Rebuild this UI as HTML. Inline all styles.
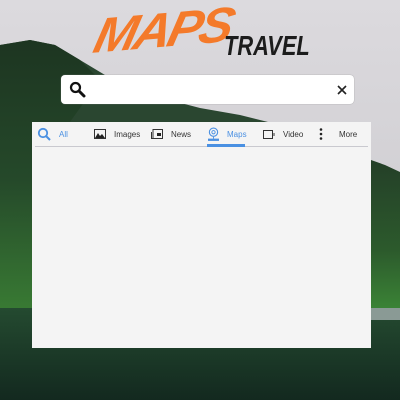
<!DOCTYPE html>
<html><head><meta charset="utf-8"><style>
*{margin:0;padding:0;box-sizing:border-box}
body{width:400px;height:400px;overflow:hidden;position:relative;font-family:"Liberation Sans",sans-serif;background:#d9d7dc}
svg.bg{position:absolute;left:0;top:0}
.logo1{position:absolute;left:102px;top:8px;font-size:50px;line-height:56px;font-weight:bold;font-style:italic;color:#f47a2a;letter-spacing:-3px;transform:skewX(-18deg) rotate(-5deg);transform-origin:left top}
.logo2{position:absolute;left:224px;top:32px;font-size:28px;line-height:28px;font-weight:bold;font-style:italic;color:#1c1c1c;transform:scaleX(0.78);transform-origin:left top;letter-spacing:0px}
.search{position:absolute;left:61px;top:75px;width:293px;height:29px;background:#fff;border-radius:4px;box-shadow:0 0 1px #888}
.panel{position:absolute;left:32px;top:122px;width:339px;height:226px;background:#f4f4f4}
.line{position:absolute;left:3px;top:23.5px;width:333px;height:1px;background:#c9c9cf}
.tab{position:absolute;top:3px;height:18px;font-size:8px;color:#333;display:flex;align-items:center}
.tab svg{margin-right:8px}
</style></head><body>
<svg class="bg" width="400" height="400" viewBox="0 0 400 400">
<defs>
<linearGradient id="sky" x1="0" y1="0" x2="0" y2="1"><stop offset="0" stop-color="#dcdade"/><stop offset="1" stop-color="#c6c5c9"/></linearGradient>
<linearGradient id="water" x1="0" y1="0" x2="0" y2="1"><stop offset="0" stop-color="#244a30"/><stop offset="1" stop-color="#13291f"/></linearGradient>
<linearGradient id="hl" x1="0" y1="0" x2="0" y2="1"><stop offset="0" stop-color="#1d3521"/><stop offset="0.5" stop-color="#25492a"/><stop offset="1" stop-color="#3a7e34"/></linearGradient>
<linearGradient id="hr" x1="0" y1="0" x2="0" y2="1"><stop offset="0" stop-color="#243f28"/><stop offset="0.6" stop-color="#2c5a2c"/><stop offset="1" stop-color="#3b8436"/></linearGradient>
</defs>
<rect width="400" height="400" fill="url(#sky)"/>
<path d="M0 45 L30 40 L55 45 L80 60 L105 75 L150 95 L200 108 L240 115 L260 120 L280 125 L0 125Z" fill="#2a4630"/>
<path d="M0 45 L30 40 L55 45 L80 60 L100 80 L70 122 L32 122 L32 320 L0 320Z" fill="url(#hl)"/>
<path d="M371 160 L385 165 L400 172 L400 310 L371 310Z" fill="url(#hr)"/>
<rect x="0" y="308" width="400" height="92" fill="url(#water)"/>
<rect x="371" y="308" width="29" height="12" fill="#8a9a95"/>
</svg>
<div class="logo1">MAPS</div>
<div class="logo2">TRAVEL</div>
<div class="search">
<svg style="position:absolute;left:8px;top:6px" width="17" height="17" viewBox="0 0 17 17"><circle cx="6.5" cy="6.5" r="4.5" fill="none" stroke="#111" stroke-width="2.2"/><path d="M10 10 L15 15" stroke="#111" stroke-width="3" stroke-linecap="round"/></svg>
<svg style="position:absolute;left:276px;top:10px" width="10" height="10" viewBox="0 0 10 10"><path d="M1 1L9 9M9 1L1 9" stroke="#222" stroke-width="1.6"/></svg>
</div>
<div class="panel">
<div class="tab" style="left:5px;color:#4a90e2"><svg width="14" height="14" viewBox="0 0 14 14"><circle cx="6" cy="6" r="4.2" fill="none" stroke="#4a90e2" stroke-width="1.8"/><path d="M9 9L13 13" stroke="#4a90e2" stroke-width="2"/></svg>All</div>
<div class="tab" style="left:62px"><svg width="12" height="10" viewBox="0 0 12 10"><rect x="0.5" y="0.5" width="11" height="9" fill="none" stroke="#333"/><path d="M1 9L4 4L6 7L8 5L11 9Z" fill="#222"/></svg>Images</div>
<div class="tab" style="left:119px"><svg width="12" height="10" viewBox="0 0 12 10"><rect x="2" y="0.5" width="9.5" height="9" fill="none" stroke="#333"/><path d="M0.5 3V9.5H2" fill="none" stroke="#333"/><rect x="6" y="4" width="4" height="3" fill="#222"/></svg>News</div>
<div class="tab" style="left:176px;color:#4a90e2"><svg width="11" height="15" viewBox="0 0 12 15"><circle cx="6" cy="5" r="4.5" fill="none" stroke="#4a90e2" stroke-width="1.2"/><circle cx="6" cy="5" r="1.8" fill="none" stroke="#4a90e2"/><path d="M6 10V12" stroke="#4a90e2"/><rect x="0" y="12" width="12" height="2.5" fill="#4a90e2"/></svg>Maps</div>
<div style="position:absolute;left:175px;top:22px;width:38px;height:2.5px;background:#4a90e2;z-index:2"></div>
<div class="tab" style="left:231px"><svg width="12" height="9" viewBox="0 0 12 9"><rect x="0.5" y="0.5" width="9" height="8" fill="none" stroke="#333"/><path d="M11 3V6" stroke="#333"/></svg>Video</div>
<div class="tab" style="left:287px"><svg width="4" height="12" viewBox="0 0 4 12"><circle cx="2" cy="1.5" r="1.3" fill="#222"/><circle cx="2" cy="6" r="1.3" fill="#222"/><circle cx="2" cy="10.5" r="1.3" fill="#222"/></svg><span style="margin-left:8px">More</span></div>
<div class="line"></div>
</div>
</body></html>
